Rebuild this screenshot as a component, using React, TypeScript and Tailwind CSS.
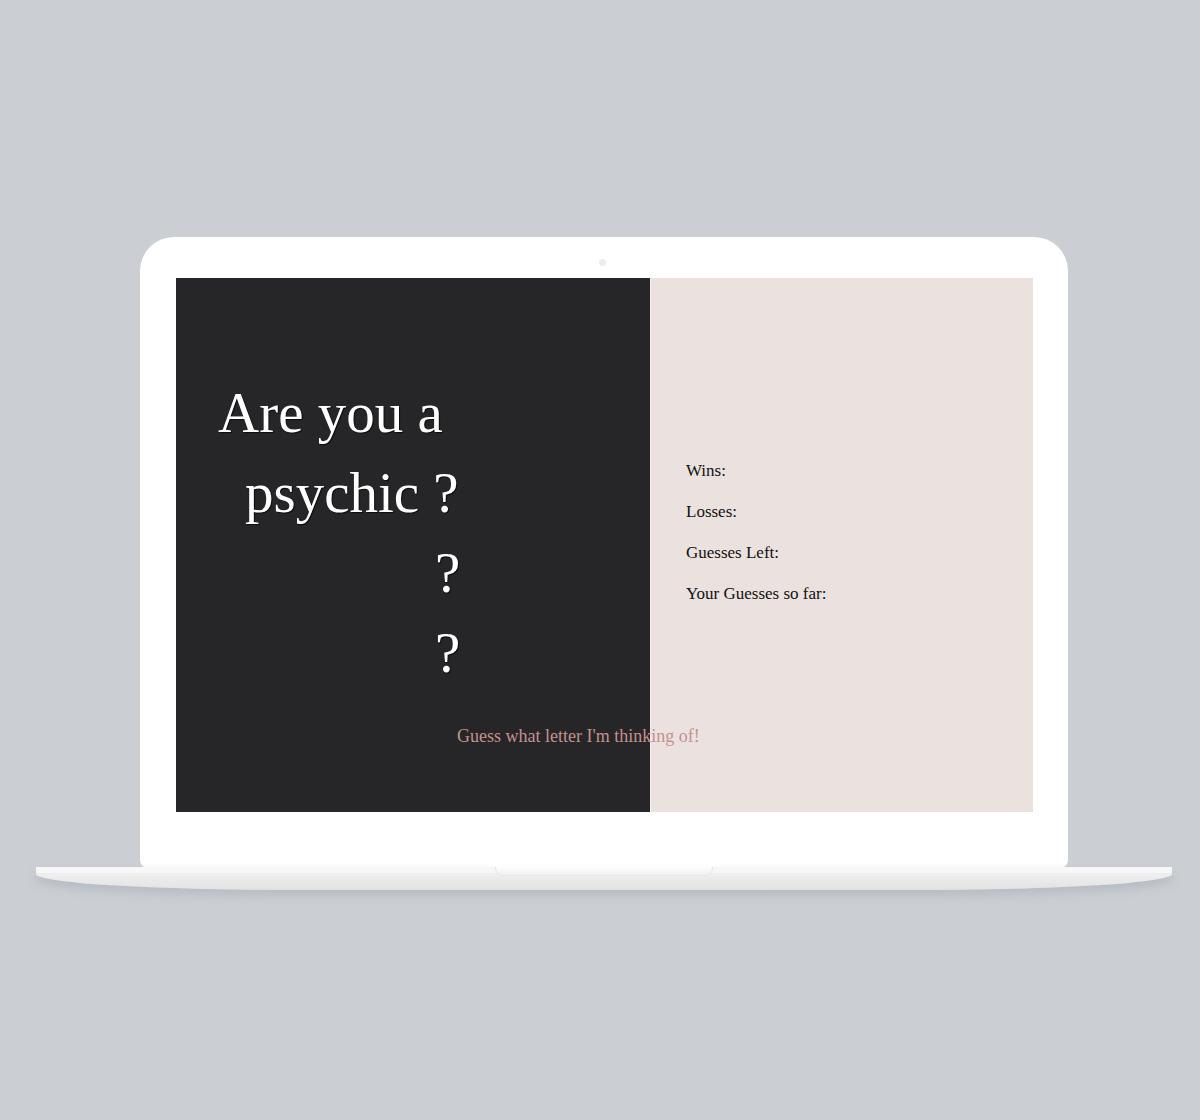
export default function App() {
  return (
    <div className="w-[1200px] h-[1120px] bg-[#cbcfd4] flex flex-col items-center pt-[237px] pl-[8px]">
      {/* Lid */}
      <div className="w-[928px] bg-white rounded-t-[34px] rounded-b-[8px] pt-[41px] pl-[36px] pr-[35px] pb-[56px] relative">
        {/* Camera */}
        <div className="absolute left-[459px] top-[22px] w-[7px] h-[7px] rounded-full bg-[#ececec]" />

        {/* Screen */}
        <div className="relative flex h-[534px] w-[857px]" style={{ fontFamily: '"Liberation Serif", "DejaVu Serif", serif' }}>
          <div className="w-[474px] bg-[#262628] pt-[95px] text-white text-[57px] leading-[80px] [text-shadow:1px_1px_1px_rgba(0,0,0,0.7)]">
            <div className="pl-[42px]">Are you a</div>
            <div className="pl-[69px]">psychic ?</div>
            <div className="pl-[259px]">?</div>
            <div className="pl-[259px]">?</div>
          </div>
          <div className="w-px bg-[#f4f0ee]" />
          <div className="flex-1 bg-[#ebe1df] pt-[181px] pl-[35px] flex flex-col gap-[17px] text-[17px] leading-[24px] text-[#111]">
            <div>Wins:</div>
            <div>Losses:</div>
            <div>Guesses Left:</div>
            <div>Your Guesses so far:</div>
          </div>

          {/* Caption straddling both panels */}
          <div className="absolute left-[281px] top-[446px] text-[18px] leading-[24px] text-[#c4918f] whitespace-nowrap">
            Guess what letter I'm thinking of!
          </div>
        </div>
      </div>

      {/* Base */}
      <div className="relative -mt-px w-[1136px] h-[23px] rounded-bl-[260px_16px] rounded-br-[260px_16px] bg-gradient-to-b from-[#f6f6f6] via-[#ebebeb] to-[#e2e2e2] shadow-[0_6px_10px_rgba(150,155,165,0.35)]">
        <div className="h-[7px] bg-[#f7f7f7] border-b border-[#ececec]" />
        <div className="absolute left-[459px] top-0 w-[218px] h-[9px] rounded-b-[8px] bg-gradient-to-b from-[#fdfdfd] to-[#f1f1f1] border border-t-0 border-[#e6e6e6]" />
      </div>
    </div>
  );
}
